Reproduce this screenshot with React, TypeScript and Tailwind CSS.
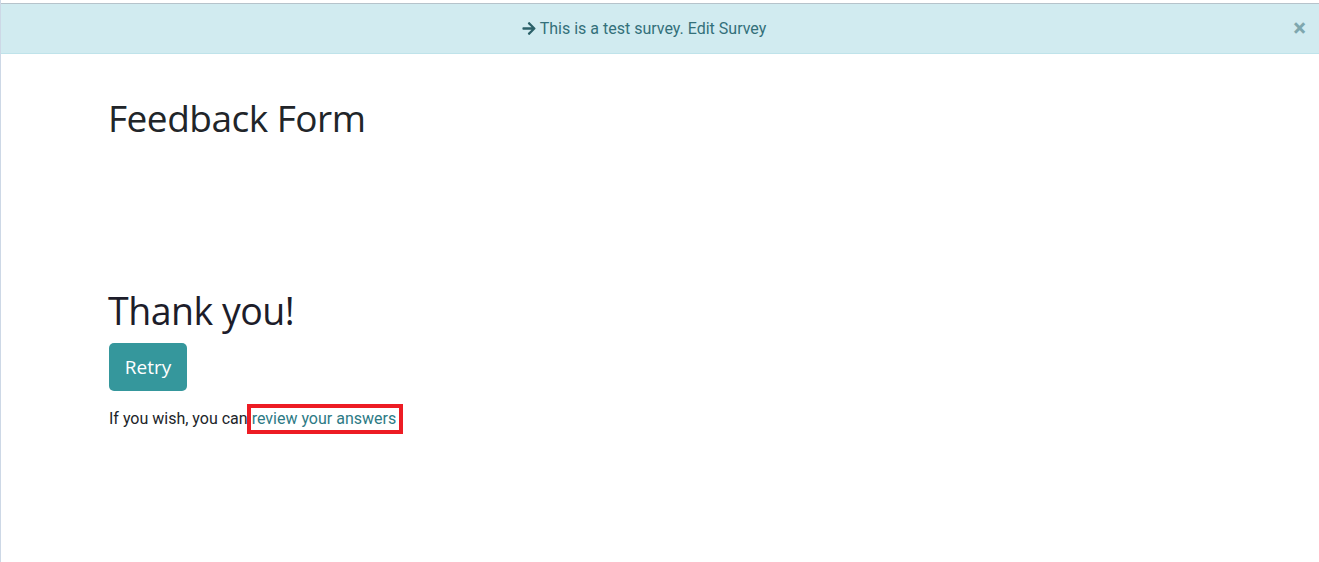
import React from "react";

function ArrowRight() {
  return (
    <svg width="14" height="15" viewBox="0 0 448 512" className="fill-[#2c6169]">
      <path d="M190.5 66.9l22.2-22.2c9.4-9.4 24.6-9.4 33.9 0L441 239c9.4 9.4 9.4 24.6 0 33.9L246.6 467.3c-9.4 9.4-24.6 9.4-33.9 0l-22.2-22.2c-9.5-9.5-9.3-25 .4-34.3L311.4 296H24c-13.3 0-24-10.7-24-24v-32c0-13.3 10.7-24 24-24h287.4L190.9 101.2c-9.8-9.3-10-24.8-.4-34.3z" />
    </svg>
  );
}

export default function App() {
  return (
    <div className="min-h-[562px] bg-white pt-[3px] border-l border-[#cdd8e6] font-['Roboto',sans-serif]">
      <div className="relative h-[51px] flex items-center justify-center pr-[32px] bg-[#d1ebf0] border-t border-[#b6c3cb] border-b border-b-[#bfe3ea] text-[16px] text-[#33707a]">
        <span className="flex items-center gap-[4px]">
          <ArrowRight />
          This is a test survey. Edit Survey
        </span>
        <span className="absolute right-[13px] top-[12px] text-[24px] leading-none font-bold text-[#7ea7ae]">×</span>
      </div>

      <div className="pl-[108px]">
        <h1 className="mt-[42px] ml-[-1px] text-[37px] leading-[44px] text-[#212529] font-['Open_Sans',sans-serif] tracking-[-0.5px]">
          Feedback Form
        </h1>

        <h2 className="mt-[149px] ml-[-1px] text-[37.5px] leading-[44px] text-[#1d1d2a] font-['Open_Sans',sans-serif] tracking-[-0.5px]">
          Thank you!
        </h2>

        <button className="mt-[10px] w-[78px] h-[48px] rounded-[5px] bg-[#35979c] text-white text-[19px] font-['Open_Sans',sans-serif]">
          Retry
        </button>

        <p className="mt-[13px] text-[16px] text-[#212529] flex items-center">
          If you wish, you can
          <span className="ml-[-1px] pl-[1px] pr-[3px] border-[4px] border-[#ed1c24] text-[#2d7a85] leading-[22px]">
            review your answers
          </span>
        </p>
      </div>
    </div>
  );
}
